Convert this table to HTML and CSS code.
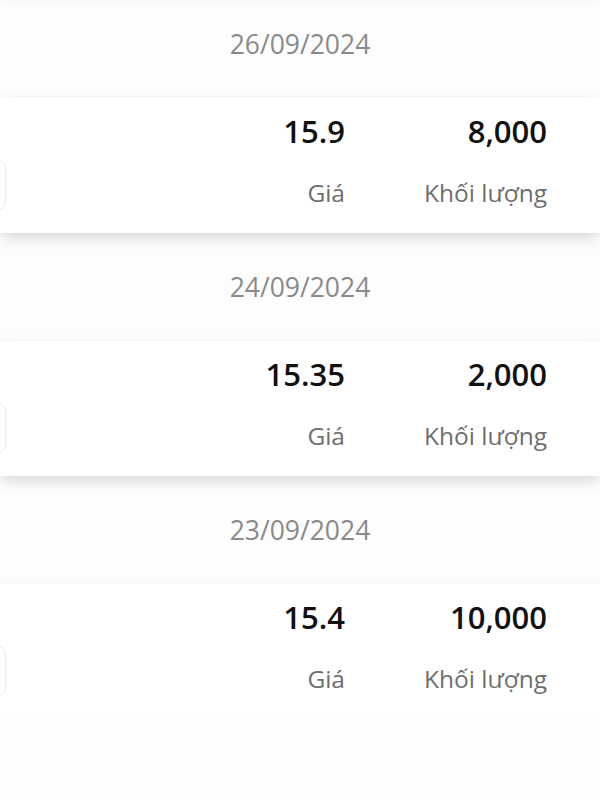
FILE: index.html
```html
<!DOCTYPE html>
<html lang="vi">
<head>
<meta charset="utf-8">
<link rel="stylesheet" href="styles.css">
</head>
<body>
<div class="list">
  <div class="prev-edge"></div>
  <div class="date">26/09/2024</div>
  <div class="card">
    <div class="side-btn"></div>
    <div class="val c2">15.9</div><div class="val c3">8,000</div>
    <div class="lbl c2">Giá</div><div class="lbl c3">Khối lượng</div>
  </div>
  <div class="date">24/09/2024</div>
  <div class="card">
    <div class="side-btn"></div>
    <div class="val c2">15.35</div><div class="val c3">2,000</div>
    <div class="lbl c2">Giá</div><div class="lbl c3">Khối lượng</div>
  </div>
  <div class="date">23/09/2024</div>
  <div class="card">
    <div class="side-btn"></div>
    <div class="val c2">15.4</div><div class="val c3">10,000</div>
    <div class="lbl c2">Giá</div><div class="lbl c3">Khối lượng</div>
  </div>
</div>
</body>
</html>
```
FILE: styles.css
```css
html, body {
  margin: 0;
  padding: 0;
  background: #fdfdfd;
  font-family: "Open Sans", "Noto Sans", sans-serif;
  overflow: hidden;
}
.list {
  margin-top: -20px;
}
.prev-edge {
  height: 10px;
  background: #fff;
  box-shadow: 0 8px 12px -2px rgba(0,0,0,0.13);
}
.date {
  height: 108px;
  line-height: 108px;
  text-align: center;
  font-size: 26.5px;
  color: #8a8a8a;
}
.card {
  position: relative;
  height: 135px;
  box-sizing: border-box;
  background: #fff;
  box-shadow: 0 8px 12px -2px rgba(0,0,0,0.13), 0 -3px 8px rgba(0,0,0,0.03);
  display: grid;
  grid-template-columns: 1fr 200px 202px;
  grid-template-rows: 50px 50px;
  row-gap: 12px;
  padding: 8px 53px 15px 0;
}
.val, .lbl {
  text-align: right;
  line-height: 50px;
}
.val {
  grid-row: 1;
  font-size: 31px;
  font-weight: 600;
  color: #111;
}
.lbl {
  grid-row: 2;
  font-size: 24.5px;
  color: #6e6e6e;
}
.c2 { grid-column: 2; }
.c3 { grid-column: 3; }
.side-btn {
  position: absolute;
  left: -40px;
  top: 62px;
  width: 44px;
  height: 48px;
  border: 1px solid #ececec;
  border-radius: 8px;
}
```
